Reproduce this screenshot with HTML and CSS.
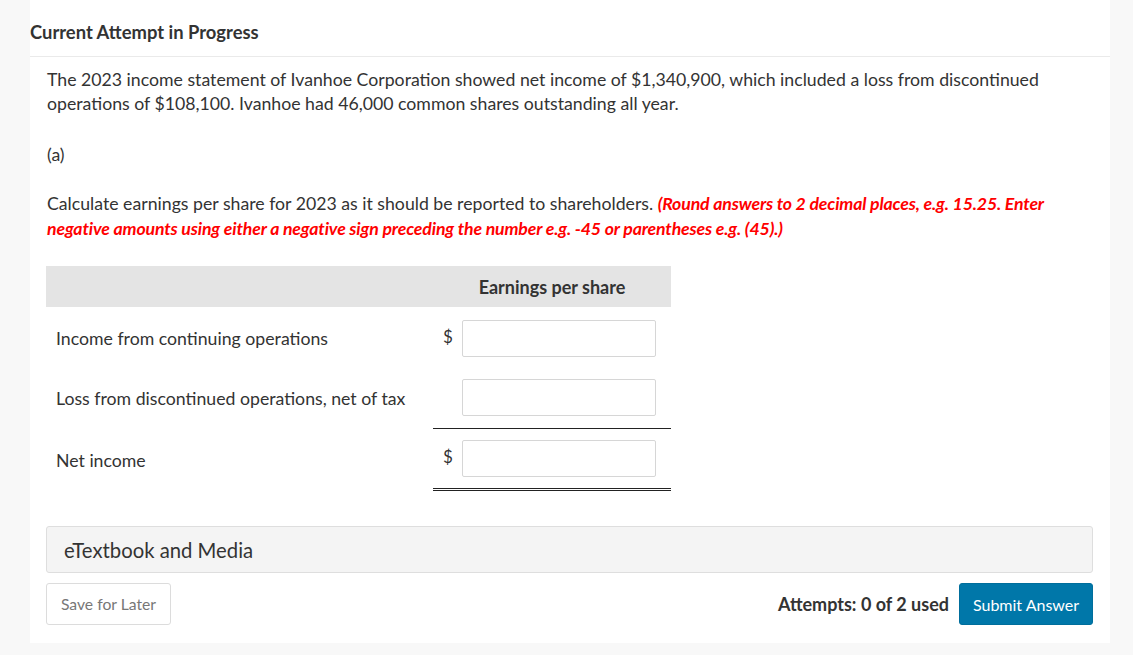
FILE: index.html
```html
<!DOCTYPE html>
<html lang="en">
<head>
<meta charset="utf-8">
<title>Current Attempt in Progress</title>
<link rel="stylesheet" href="styles.css">
</head>
<body>
<div class="page">
  <div class="panel">
    <div class="panel-header">Current Attempt in Progress</div>
    <div class="panel-body">
      <p class="question">The 2023 income statement of Ivanhoe Corporation showed net income of $1,340,900, which included a loss from discontinued operations of $108,100. Ivanhoe had 46,000 common shares outstanding all year.</p>
      <p class="part">(a)</p>
      <p class="instructions">Calculate earnings per share for 2023 as it should be reported to shareholders. <span class="hint">(Round answers to 2 decimal places, e.g. 15.25. Enter negative amounts using either a negative sign preceding the number e.g. -45 or parentheses e.g. (45).)</span></p>

      <div class="eps-table">
        <div class="th-blank"></div>
        <div class="th">Earnings per share</div>

        <div class="cell label r1">Income from continuing operations</div>
        <div class="cell cur r1">$</div>
        <div class="cell inp r1"><input class="answer" type="text"></div>

        <div class="cell label r2">Loss from discontinued operations, net of tax</div>
        <div class="cell cur r2 single"></div>
        <div class="cell inp r2 single"><input class="answer" type="text"></div>

        <div class="cell label r3">Net income</div>
        <div class="cell cur r3 double">$</div>
        <div class="cell inp r3 double"><input class="answer" type="text"></div>
      </div>

      <div class="media">eTextbook and Media</div>

      <div class="actions">
        <button class="btn-save" type="button">Save for Later</button>
        <div class="actions-right">
          <span class="attempts">Attempts: 0 of 2 used</span>
          <button class="btn-submit" type="button">Submit Answer</button>
        </div>
      </div>
    </div>
  </div>
</div>
</body>
</html>
```

FILE: styles.css
```css
html, body {
  margin: 0;
  padding: 0;
}
body {
  background: #f8f8f8;
  font-family: Lato, "Open Sans", "Liberation Sans", sans-serif;
  color: #333;
}
.page {
  padding-left: 30px;
  width: 1080px;
  height: 655px;
}
.panel {
  background: #fff;
  height: 643px;
}
.panel-header {
  box-sizing: border-box;
  height: 57px;
  border-bottom: 1px solid #eaeaea;
  font-size: 18.4px;
  font-weight: 700;
  line-height: 20px;
  padding-top: 22px;
}
.panel-body {
  padding: 0 17px 0 16px;
}
.question {
  margin: 11px 0 0 1px;
  font-size: 17.7px;
  line-height: 24px;
}
.part {
  margin: 27px 0 0 1px;
  font-size: 17.7px;
  line-height: 24px;
}
.instructions {
  margin: 24px 0 0 1px;
  font-size: 17.7px;
  line-height: 25px;
}
.hint {
  color: #ff0000;
  font-weight: 700;
  font-style: italic;
  letter-spacing: -0.15px;
}
.eps-table {
  margin-top: 25px;
  width: 625px;
  display: grid;
  grid-template-columns: 387px 29px 209px;
}
.th-blank, .th {
  background: #e4e4e4;
  height: 41px;
}
.th {
  grid-column: 2 / 4;
  font-weight: 700;
  font-size: 18px;
  display: flex;
  align-items: center;
  justify-content: center;
}
.cell {
  display: flex;
  align-items: center;
  font-size: 17.7px;
}
.label {
  padding-left: 10px;
}
.cur {
  padding-left: 10px;
  font-size: 17px;
}
.r1 { padding-top: 13px; padding-bottom: 10px; }
.r2 { padding-top: 12px; padding-bottom: 12px; }
.r3 { padding-top: 11px; padding-bottom: 11px; }
.cur.r1 { padding-bottom: 14px; }
.cur.r3 { padding-bottom: 15px; }
.single {
  border-bottom: 1px solid #222;
}
.double {
  border-bottom: 3px double #222;
}
.answer {
  width: 194px;
  height: 37px;
  box-sizing: border-box;
  border: 1px solid #d6d6d6;
  border-radius: 2px;
  margin: 0;
  padding: 0 8px;
  font-family: inherit;
  font-size: 16px;
}
.media {
  margin-top: 35px;
  height: 47px;
  box-sizing: border-box;
  background: #f4f4f4;
  border: 1px solid #dedede;
  border-radius: 3px;
  font-size: 20.3px;
  display: flex;
  align-items: center;
  padding-left: 17px;
}
.actions {
  margin-top: 10px;
  display: flex;
  justify-content: space-between;
  align-items: center;
}
.btn-save {
  width: 125px;
  height: 42px;
  background: #fff;
  border: 1px solid #dcdcdc;
  border-radius: 3px;
  font-family: inherit;
  font-size: 15.7px;
  color: #777;
  padding: 0;
}
.actions-right {
  display: flex;
  align-items: center;
  gap: 10px;
}
.attempts {
  font-weight: 700;
  font-size: 18px;
}
.btn-submit {
  width: 134px;
  height: 42px;
  background: #0077a9;
  border: 1px solid #006e9c;
  border-radius: 3px;
  color: #fff;
  font-family: inherit;
  font-size: 16px;
  padding: 0;
}
```
